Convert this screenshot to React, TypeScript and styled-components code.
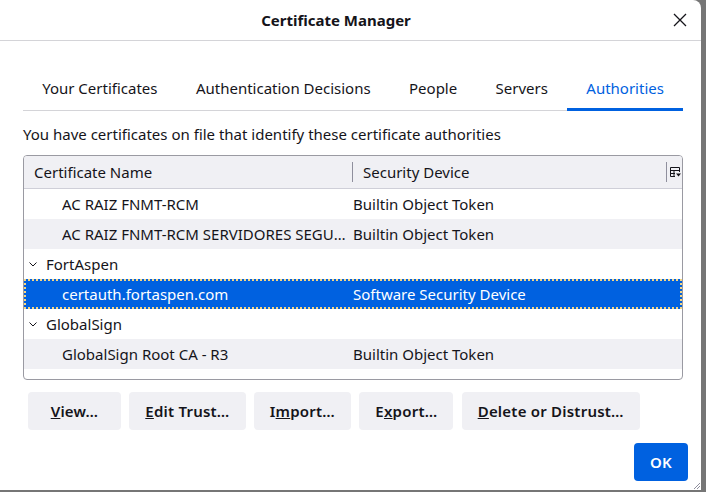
import React from "react";
import styled, { createGlobalStyle } from "styled-components";

const GlobalStyle = createGlobalStyle`
  html, body {
    margin: 0;
    padding: 0;
    background: #767676;
  }
  body {
    font-family: "Noto Sans", "Open Sans", sans-serif;
    color: #15141a;
  }
`;

const Dialog = styled.div`
  position: relative;
  width: 701px;
  height: 490px;
  background: #ffffff;
  border-top-right-radius: 8px;
  display: flex;
  flex-direction: column;
  box-sizing: border-box;
`;

const Header = styled.div`
  height: 41px;
  display: flex;
  align-items: center;
  border-bottom: 1px solid #d4d4d8;
  box-sizing: border-box;
  padding-right: 13px;
`;

const Title = styled.div`
  flex: 1;
  text-align: center;
  font-size: 15px;
  font-weight: 700;
`;

const CloseButton = styled.button`
  width: 16px;
  height: 16px;
  padding: 0;
  border: none;
  background: none;
  display: flex;
  align-items: center;
  justify-content: center;
  cursor: pointer;
`;

const Content = styled.div`
  padding: 27px 18px 0 23px;
  display: flex;
  flex-direction: column;
`;

const TabStrip = styled.div`
  display: flex;
  border-bottom: 1px solid #d4d4d8;
`;

const Tab = styled.div<{ active?: boolean }>`
  padding: 10px 19.2px 10px;
  line-height: 20px;
  font-size: 15px;
  margin-bottom: -1px;
  color: ${({ active }) => (active ? "#0061e0" : "#15141a")};
  border-bottom: 3px solid ${({ active }) => (active ? "#0061e0" : "transparent")};
  white-space: nowrap;
`;

const Description = styled.div`
  margin-top: 13px;
  font-size: 15px;
  line-height: 20px;
`;

const Tree = styled.div`
  margin-top: 11px;
  height: 225px;
  border: 1px solid #9a9aa2;
  border-radius: 4px;
  box-sizing: border-box;
  overflow: hidden;
  font-size: 15px;
`;

const HeaderRow = styled.div`
  display: grid;
  grid-template-columns: 328px 1fr 16px;
  height: 33px;
  background: #f0f0f4;
  border-bottom: 1px solid #cfcfd8;
  box-sizing: border-box;
  align-items: center;
`;

const HeaderCell = styled.div<{ divider?: boolean }>`
  display: flex;
  align-items: center;
  height: 20px;
  padding-left: 10px;
  border-left: ${({ divider }) => (divider ? "1px solid #8f8f9d" : "none")};
  white-space: nowrap;
`;

const PickerCell = styled.div`
  display: flex;
  align-items: center;
  height: 20px;
  border-left: 1px solid #8f8f9d;
  padding-left: 2px;
`;

const Row = styled.div<{ striped?: boolean; selected?: boolean }>`
  display: grid;
  grid-template-columns: 328px 1fr;
  height: 30px;
  line-height: 31px;
  align-items: center;
  background: ${({ striped, selected }) =>
    selected ? "#0061e0" : striped ? "#f0f0f4" : "#ffffff"};
  color: ${({ selected }) => (selected ? "#ffffff" : "#15141a")};
  outline: ${({ selected }) => (selected ? "2px dotted #f6d682" : "none")};
  outline-offset: -2px;
`;

const NameCell = styled.div<{ indent: number }>`
  display: flex;
  align-items: center;
  padding-left: ${({ indent }) => indent}px;
  padding-right: 4px;
  min-width: 0;
  overflow: hidden;
`;

const CellText = styled.span`
  white-space: nowrap;
  overflow: hidden;
  text-overflow: ellipsis;
`;

const DeviceCell = styled.div`
  padding-left: 1px;
  white-space: nowrap;
`;

const Twisty = styled.span`
  display: inline-flex;
  width: 14px;
  margin-left: 2px;
  margin-right: 6px;
  justify-content: center;
`;

const ButtonRow = styled.div`
  display: flex;
  gap: 8.3px;
  margin-top: 12px;
  padding-left: 5px;
`;

const Button = styled.button<{ primary?: boolean }>`
  height: 38px;
  min-width: ${({ primary }) => (primary ? "54px" : "93px")};
  padding: 0 16px;
  border: none;
  border-radius: 4px;
  background: ${({ primary }) => (primary ? "#0061e0" : "#f0f0f4")};
  color: ${({ primary }) => (primary ? "#ffffff" : "#15141a")};
  font-family: "Noto Sans", "Open Sans", sans-serif;
  font-size: 15px;
  font-weight: 600;
  letter-spacing: 0.22px;
  white-space: nowrap;
  cursor: pointer;
`;

const AccessKey = styled.span`
  text-decoration: underline;
`;

const Footer = styled.div`
  display: flex;
  justify-content: flex-end;
  padding: 13px 13px 0 0;
`;

const Grip = styled.svg`
  position: absolute;
  right: 0;
  bottom: 0;
`;

const Chevron = () => (
  <svg width="8" height="5" viewBox="0 0 8 5">
    <path d="M0.5 0.5 L4 4 L7.5 0.5" fill="none" stroke="#15141a" strokeWidth="1" />
  </svg>
);

const ColumnPicker = () => (
  <svg width="12" height="12" viewBox="0 0 12 12">
    <path d="M1.5 1.5 H10.5 V6 M1.5 1.5 V10.5 H6 M1.5 4.5 H10.5 M5 4.5 V10.5 M1.5 7.5 H6"
      fill="none" stroke="#15141a" strokeWidth="1" />
    <path d="M7 7.5 H12 L9.5 10.5 Z" fill="#15141a" />
  </svg>
);

type Entry =
  | { kind: "group"; name: string }
  | { kind: "cert"; name: string; device: string; selected?: boolean };

const entries: Entry[] = [
  { kind: "cert", name: "AC RAIZ FNMT-RCM", device: "Builtin Object Token" },
  { kind: "cert", name: "AC RAIZ FNMT-RCM SERVIDORES SEGUROS", device: "Builtin Object Token" },
  { kind: "group", name: "FortAspen" },
  { kind: "cert", name: "certauth.fortaspen.com", device: "Software Security Device", selected: true },
  { kind: "group", name: "GlobalSign" },
  { kind: "cert", name: "GlobalSign Root CA - R3", device: "Builtin Object Token" },
];

const tabs = ["Your Certificates", "Authentication Decisions", "People", "Servers", "Authorities"];

const App: React.FunctionComponent = () => {
  return (
    <>
      <GlobalStyle />
      <Dialog>
        <Header>
          <Title>Certificate Manager</Title>
          <CloseButton aria-label="Close">
            <svg width="14" height="14" viewBox="0 0 14 14">
              <path d="M1 1 L13 13 M13 1 L1 13" stroke="#15141a" strokeWidth="1.3" />
            </svg>
          </CloseButton>
        </Header>
        <Content>
          <TabStrip>
            {tabs.map((t) => (
              <Tab key={t} active={t === "Authorities"}>
                {t}
              </Tab>
            ))}
          </TabStrip>
          <Description>
            You have certificates on file that identify these certificate authorities
          </Description>
          <Tree>
            <HeaderRow>
              <HeaderCell>Certificate Name</HeaderCell>
              <HeaderCell divider>Security Device</HeaderCell>
              <PickerCell>
                <ColumnPicker />
              </PickerCell>
            </HeaderRow>
            {entries.map((e, i) =>
              e.kind === "group" ? (
                <Row key={i} striped={i % 2 === 1}>
                  <NameCell indent={0}>
                    <Twisty>
                      <Chevron />
                    </Twisty>
                    <CellText>{e.name}</CellText>
                  </NameCell>
                  <DeviceCell />
                </Row>
              ) : (
                <Row key={i} striped={i % 2 === 1} selected={e.selected}>
                  <NameCell indent={38}>
                    <CellText>{e.name}</CellText>
                  </NameCell>
                  <DeviceCell>{e.device}</DeviceCell>
                </Row>
              )
            )}
          </Tree>
          <ButtonRow>
            <Button>
              <AccessKey>V</AccessKey>iew…
            </Button>
            <Button>
              <AccessKey>E</AccessKey>dit Trust…
            </Button>
            <Button>
              I<AccessKey>m</AccessKey>port…
            </Button>
            <Button>
              E<AccessKey>x</AccessKey>port…
            </Button>
            <Button>
              <AccessKey>D</AccessKey>elete or Distrust…
            </Button>
          </ButtonRow>
        </Content>
        <Footer>
          <Button primary>OK</Button>
        </Footer>
        <Grip width="10" height="10" viewBox="0 0 10 10">
          <path d="M9 3 L3 9 M9 6 L6 9" stroke="#8f8f9d" strokeWidth="1" />
        </Grip>
      </Dialog>
    </>
  );
};

export default App;
